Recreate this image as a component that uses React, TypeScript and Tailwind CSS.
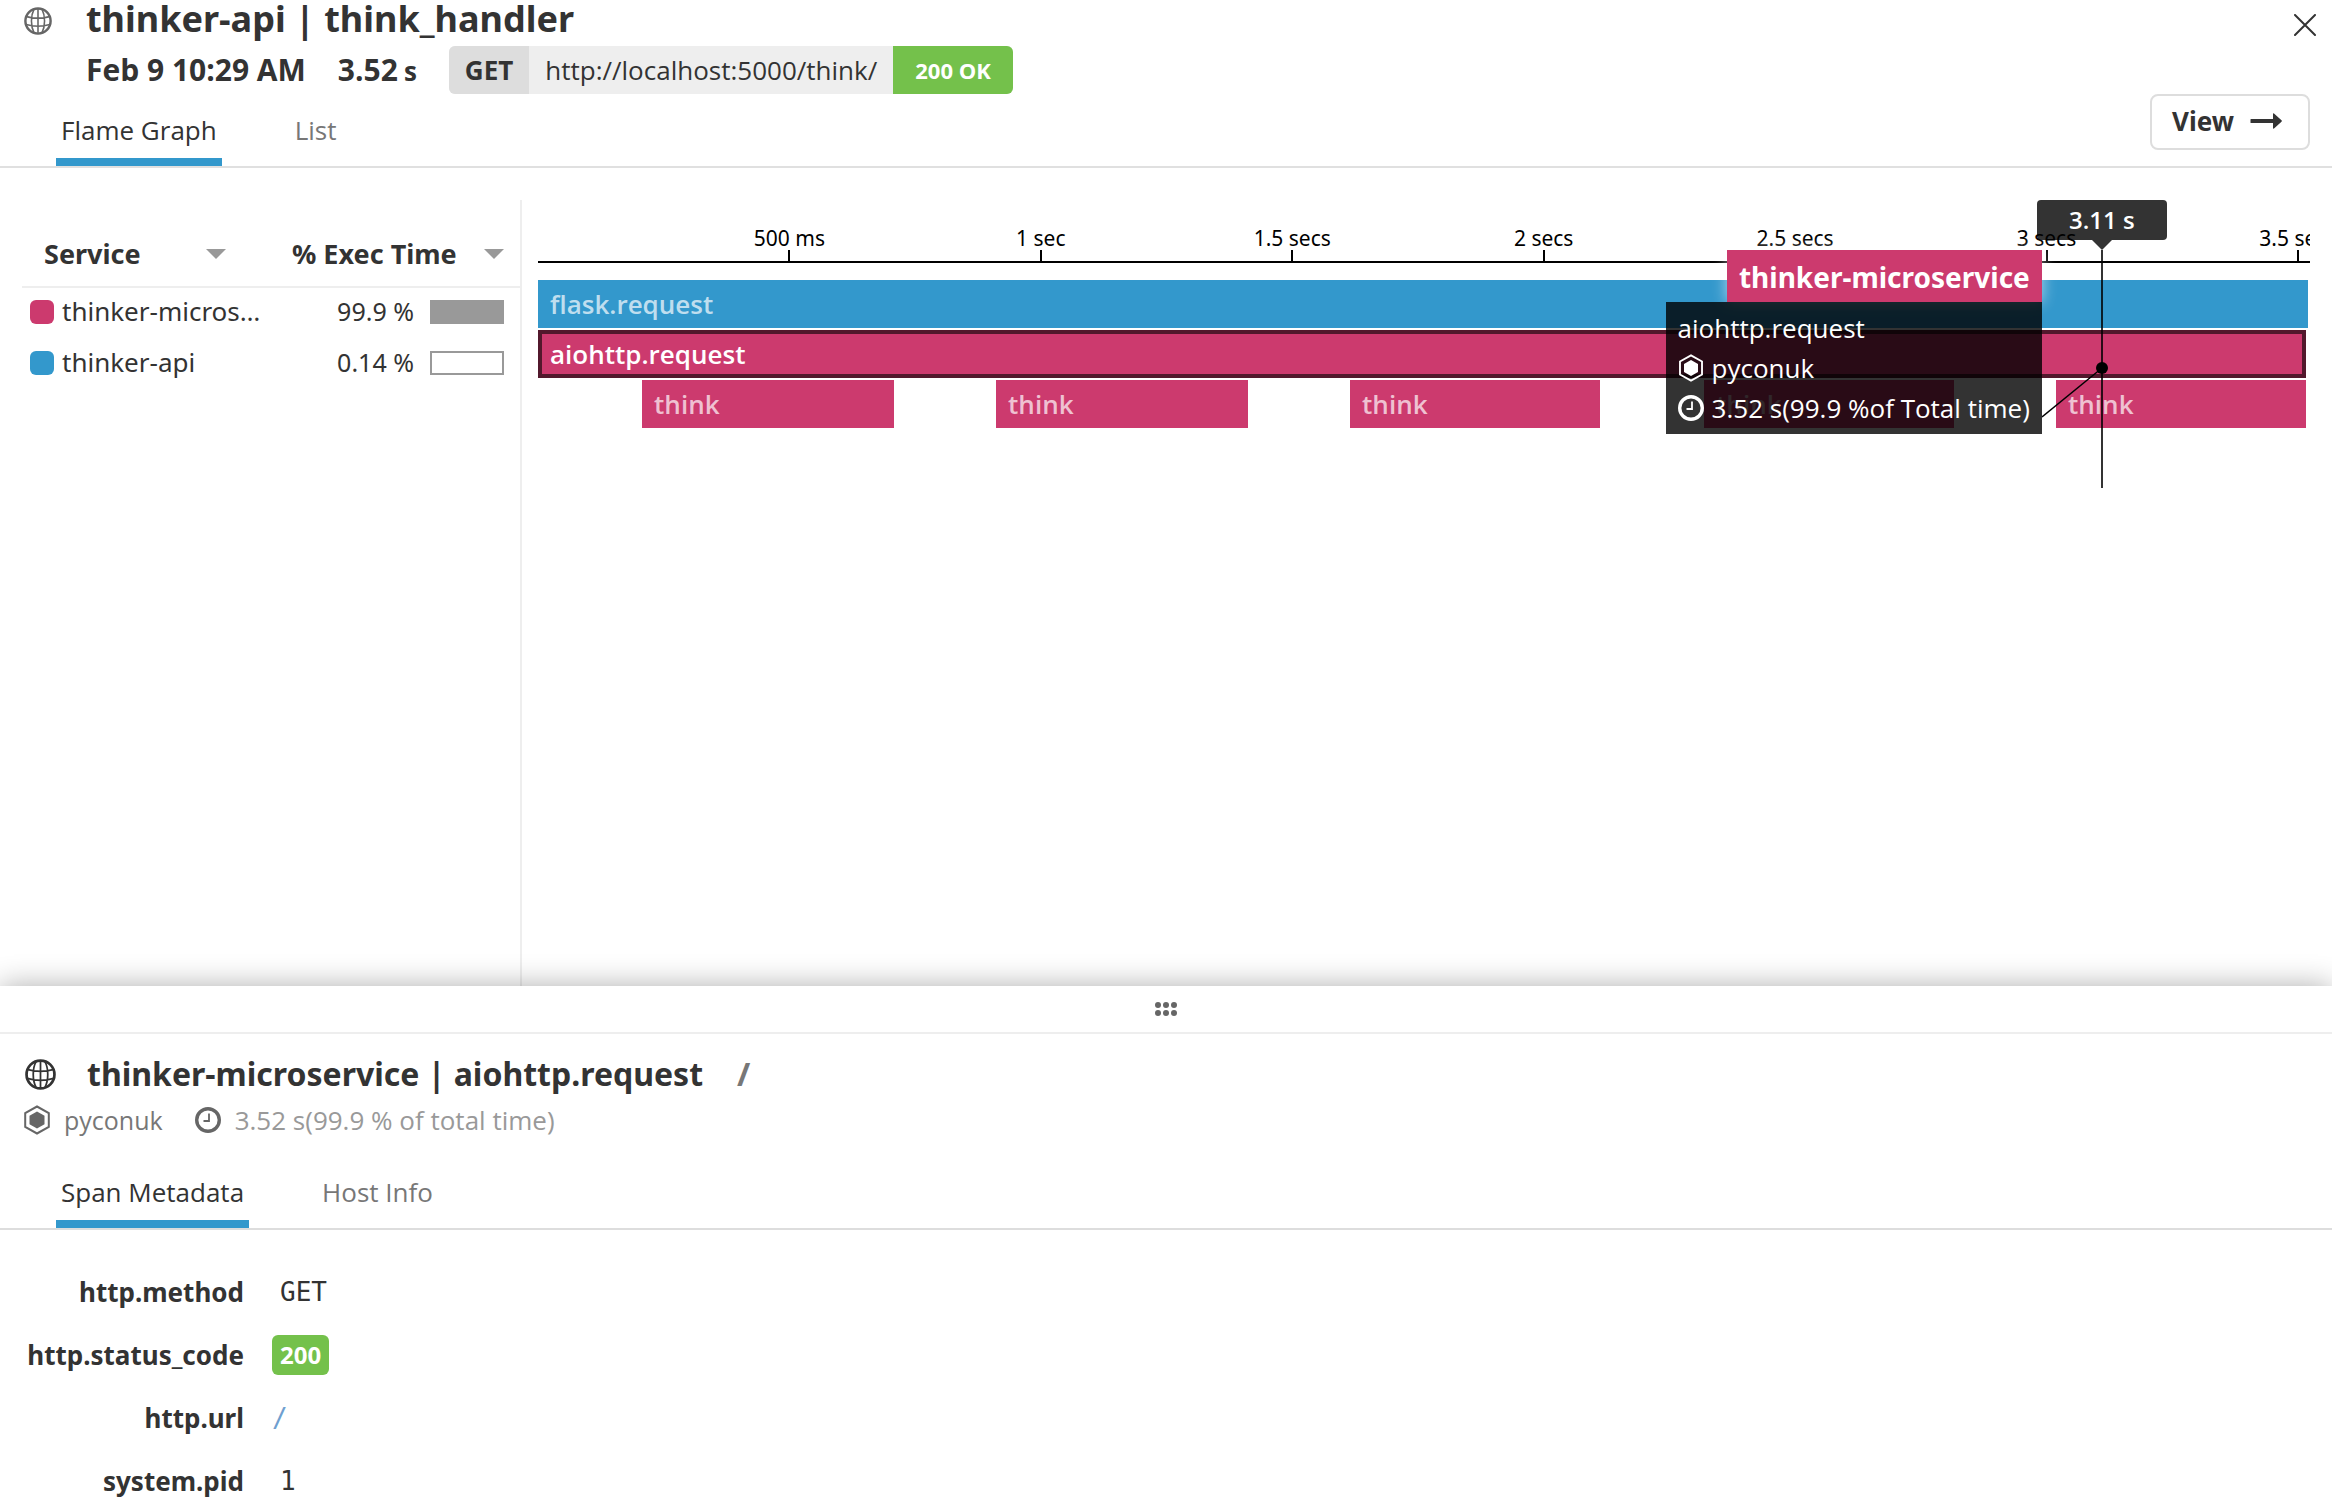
import type { ReactNode } from "react";

const SPAN_MS = 3524;
const pct = (ms: number) => `${(ms / SPAN_MS) * 100}%`;

const ticks = [
  { at: 500, label: "500 ms" },
  { at: 1000, label: "1 sec" },
  { at: 1500, label: "1.5 secs" },
  { at: 2000, label: "2 secs" },
  { at: 2500, label: "2.5 secs" },
  { at: 3000, label: "3 secs" },
  { at: 3500, label: "3.5 secs" },
];

type Span = { name: string; start: number; end: number; tone: "blue" | "pink" | "selected" };

const lanes: Span[][] = [
  [{ name: "flask.request", start: 0, end: 3520, tone: "blue" }],
  [{ name: "aiohttp.request", start: 0, end: 3516, tone: "selected" }],
  [
    { name: "think", start: 207, end: 708, tone: "pink" },
    { name: "think", start: 911, end: 1412, tone: "pink" },
    { name: "think", start: 1615, end: 2112, tone: "pink" },
    { name: "think", start: 2319, end: 2816, tone: "pink" },
    { name: "think", start: 3019, end: 3516, tone: "pink" },
  ],
];

const tones = {
  blue: "bg-[#3398cc] pl-3 text-white/70",
  pink: "bg-[#cc3a6e] pl-3 text-white/70",
  selected: "border-4 border-[#52182c] bg-[#cc3a6e] pl-2 text-white",
};

const services = [
  { name: "thinker-micros…", swatch: "bg-[#cc3a6e]", percent: "99.9 %", bar: "bg-[#999]" },
  { name: "thinker-api", swatch: "bg-[#3398cc]", percent: "0.14 %", bar: "bg-white" },
];

function Globe({ className }: { className: string }) {
  return (
    <svg viewBox="0 0 32 32" className={className} fill="none" stroke="currentColor" strokeWidth="1.8" aria-hidden="true">
      <circle cx="16" cy="16" r="14.4" strokeWidth="2.8" />
      <path d="M16 2v28M11.5 2.5C7.5 10 7.5 22 11.5 29.5M20.500 2.500C24.500 10 24.500 22 20.500 29.500M3 11Q16 14.500 29 11M2.500 20Q16 24 29.500 20" />
    </svg>
  );
}

function Hexagon({ className }: { className: string }) {
  return (
    <svg viewBox="0 0 26 30" className={className} aria-hidden="true">
      <path d="M13 1.500L24.800 8v14L13 28.500 1.200 22V8z" fill="none" stroke="currentColor" strokeWidth="2" />
      <path d="M13 6.500L20.500 10.700v8.600L13 23.500 5.500 19.300v-8.600z" fill="currentColor" />
    </svg>
  );
}

function Clock({ className }: { className: string }) {
  return (
    <svg viewBox="0 0 26 26" className={className} fill="none" stroke="currentColor" aria-hidden="true">
      <circle cx="13" cy="13" r="11.300" strokeWidth="3.400" />
      <path d="M14 6.500v7.500H8.500" strokeWidth="1.800" />
    </svg>
  );
}

function Caret() {
  return (
    <svg viewBox="0 0 20 10" className="h-2.5 w-5 fill-[#999]" aria-hidden="true">
      <path d="M0 0h20L10 10z" />
    </svg>
  );
}

function Tab({ active, children }: { active?: boolean; children: ReactNode }) {
  return (
    <button
      type="button"
      role="tab"
      aria-selected={!!active}
      className={
        active
          ? "border-b-8 border-[#3398cc] px-[5px] pb-2.5 text-[26px] leading-9 text-[#333]"
          : "border-b-8 border-transparent px-[5px] pb-2.5 text-[26px] leading-9 text-[#777]"
      }
    >
      {children}
    </button>
  );
}

function Header() {
  return (
    <header className="flex justify-between border-b-2 border-[#e0e0e0]">
      <div>
        <div className="flex items-center">
          <Globe className="ml-6 mt-1 size-7 text-[#666]" />
          <h1 className="ml-[34px] font-['Noto_Sans',sans-serif] text-[36px] leading-[38px] font-bold">thinker-api | think_handler</h1>
        </div>
        <div className="mt-2 flex h-12 items-center pl-[86px] font-bold">
          <span className="text-[30px] leading-10">Feb 9 10:29 AM</span>
          <span className="ml-8 flex items-baseline gap-1.5 text-[30px] leading-10">
            3.52 <span className="text-[26px]">s</span>
          </span>
          <div className="ml-8 flex h-12 items-center overflow-hidden rounded-md bg-[#eee] text-[26px]">
            <span className="flex h-full items-center bg-[#ddd] px-4">GET</span>
            <span className="px-4 font-normal">http://localhost:5000/think/</span>
            <span className="flex h-full items-center bg-[#74c14b] px-[22px] text-[22px] text-white">200 OK</span>
          </div>
        </div>
        <div role="tablist" className="mt-[18px] flex gap-[68px] pl-14">
          <Tab active>Flame Graph</Tab>
          <Tab>List</Tab>
        </div>
      </div>
      <div className="flex flex-col items-end">
        <button type="button" aria-label="Close" className="mt-3.5 mr-4">
          <svg viewBox="0 0 22 22" className="size-[22px]" stroke="#333" strokeWidth="2" strokeLinecap="round" aria-hidden="true">
            <path d="M1 1l20 20M21 1L1 21" />
          </svg>
        </button>
        <button type="button" className="mt-[58px] mr-[22px] flex h-14 items-center rounded-lg border-2 border-[#ddd] pr-[26px] pb-0.5 pl-5 font-['Noto_Sans',sans-serif] text-[26px] font-bold">
          View
          <svg viewBox="0 0 32 16" className="ml-4 h-4 w-8 fill-[#333]" aria-hidden="true">
            <path d="M1 6h22V1q0-1 1-.5l7.500 6.800q.7.700 0 1.400L24 15.500q-1 .5-1-.5v-5H1q-.5 0-.5-.5v-3q0-.5.500-.5z" />
          </svg>
        </button>
      </div>
    </header>
  );
}

function ServiceTable() {
  return (
    <div className="w-[522px] shrink-0 border-r-2 border-[#eee] pl-[22px]">
      <table className="w-full table-fixed font-['Noto_Sans',sans-serif]">
        <thead>
          <tr className="border-b-2 border-[#eee] text-left text-[27px] leading-9">
            <th className="w-[240px] pt-9 pr-9 pb-[14px] pl-[22px]">
              <span className="flex items-center justify-between">Service <Caret /></span>
            </th>
            <th className="pt-9 pr-4 pb-[14px] pl-[30px]">
              <span className="flex items-center justify-between">% Exec Time <Caret /></span>
            </th>
          </tr>
        </thead>
        <tbody>
          {services.map((s) => (
            <tr key={s.name} className="h-[52px]">
              <td className="pb-1 pl-2">
                <span className="flex items-center gap-2">
                  <span className={`size-6 rounded-md ${s.swatch}`} />
                  <span className="pb-0.5 text-[26px] leading-8">{s.name}</span>
                </span>
              </td>
              <td className="pr-4 pb-1">
                <span className="flex items-center justify-end gap-4">
                  <span className="pb-0.5 text-[25px] leading-8">{s.percent}</span>
                  <span className={`h-6 w-[74px] border-2 border-[#999] ${s.bar}`} />
                </span>
              </td>
            </tr>
          ))}
        </tbody>
      </table>
    </div>
  );
}

function Cursor() {
  return (
    <div className="absolute top-0 w-0" style={{ left: pct(3110) }}>
      <div className="absolute top-[50px] -left-px h-[238px] w-0.5 bg-black/80" />
      <div className="absolute top-0 -left-[65px] flex h-10 w-[130px] items-center justify-center rounded bg-black/80 text-[24px] font-semibold text-white">
        3.11 s
      </div>
      <svg viewBox="0 0 20 10" className="absolute top-10 -left-2.5 h-2.5 w-5 max-w-none fill-black/80" aria-hidden="true">
        <path d="M0 0h20L10 10z" />
      </svg>
      <svg viewBox="0 0 68 60" className="absolute top-40 -left-[60px] h-[60px] w-[68px] max-w-none" aria-hidden="true">
        <path d="M0 57L60 8" stroke="black" strokeWidth="1.500" />
        <circle cx="60" cy="8" r="6" />
      </svg>
      <div role="tooltip" className="absolute top-[50px] right-[60px] flex flex-col items-end whitespace-nowrap text-white">
        <div className="h-[52px] bg-[#cc3a6e] px-3 font-['Noto_Sans',sans-serif] text-[28px] leading-[54px] font-bold shadow-[0_0_14px_rgba(255,255,255,0.6)]">
          thinker-microservice
        </div>
        <div className="relative bg-black/80 px-3 py-1.5 text-[26px] leading-10">
          <p>aiohttp.request</p>
          <p className="flex items-center gap-2">
            <Hexagon className="h-7 w-[26px]" /> pyconuk
          </p>
          <p className="flex items-center gap-2">
            <Clock className="size-[26px]" /> 3.52 s(99.9 %of Total time)
          </p>
        </div>
      </div>
    </div>
  );
}

function FlameGraph() {
  return (
    <div className="min-w-0 flex-1 pr-[22px] pl-4">
      <div className="relative">
        <div className="relative h-[63px] overflow-hidden border-b-2 border-black text-black">
          {ticks.map((t) => (
            <div key={t.at} className="absolute bottom-0 flex w-28 -translate-x-1/2 flex-col items-center" style={{ left: pct(t.at) }}>
              <span className="font-['Noto_Sans',sans-serif] text-[21px] leading-6 whitespace-nowrap">{t.label}</span>
              <span className="h-[11px] w-0.5 bg-black" />
            </div>
          ))}
        </div>
        <div className="mt-[17px] flex flex-col gap-0.5">
          {lanes.map((lane, i) => (
            <div key={i} className="relative h-12">
              {lane.map((s) => (
                <div
                  key={s.start}
                  className={`absolute inset-y-0 flex items-center text-[26px] font-semibold ${tones[s.tone]}`}
                  style={{ left: pct(s.start), width: pct(s.end - s.start) }}
                >
                  {s.name}
                </div>
              ))}
            </div>
          ))}
        </div>
        <Cursor />
      </div>
    </div>
  );
}

function Row({ label, children }: { label: string; children: ReactNode }) {
  return (
    <tr className="h-[63px]">
      <th scope="row" className="w-[244px] text-right font-['Noto_Sans',sans-serif] font-bold">{label}</th>
      <td className="pl-7">{children}</td>
    </tr>
  );
}

function SpanDetails() {
  return (
    <section className="relative bg-white shadow-[0_0_28px_rgba(0,0,0,0.32)]">
      <div className="flex h-12 items-center justify-center border-b-2 border-[#eee]">
        <svg viewBox="0 0 22 14" className="h-3.5 w-[22px] fill-[#666]" aria-hidden="true">
          {[3, 11, 19].map((x) => [3, 11].map((y) => <circle key={`${x}-${y}`} cx={x} cy={y} r="3" />))}
        </svg>
      </div>
      <div className="flex items-center pt-5 pl-[25px] font-['Noto_Sans',sans-serif] text-[32px] leading-10 font-bold">
        <Globe className="size-[31px]" />
        <h2 className="ml-[31px]">thinker-microservice | aiohttp.request</h2>
        <span className="ml-[34px] text-[#777]">/</span>
      </div>
      <div className="mt-2.5 flex items-center pl-6 text-[#666] leading-8">
        <Hexagon className="h-[30px] w-[26px]" />
        <span className="ml-3.5 text-[25px] text-[#777]">pyconuk</span>
        <Clock className="ml-8 size-[26px]" />
        <span className="ml-3.5 text-[26px] text-[#999]">3.52 s(99.9 % of total time)</span>
      </div>
      <div role="tablist" className="mt-[38px] flex gap-[68px] border-b-2 border-[#ddd] pl-14">
        <Tab active>Span Metadata</Tab>
        <Tab>Host Info</Tab>
      </div>
      <table className="mt-[30px] text-[26px] leading-9">
        <tbody>
          <Row label="http.method">
            <span className="pl-2 font-['DejaVu_Sans_Mono',monospace]">GET</span>
          </Row>
          <Row label="http.status_code">
            <span className="inline-block rounded-md bg-[#74c14b] px-2 text-[24px] leading-10 font-bold text-white">200</span>
          </Row>
          <Row label="http.url">
            <a href="/" className="font-['DejaVu_Sans_Mono',monospace] text-[#6f9fd0]">/</a>
          </Row>
          <Row label="system.pid">
            <span className="pl-2 font-['DejaVu_Sans_Mono',monospace]">1</span>
          </Row>
        </tbody>
      </table>
    </section>
  );
}

export default function App() {
  return (
    <div className="flex min-h-screen flex-col overflow-hidden bg-white font-['Open_Sans',sans-serif] text-[#333]">
      <Header />
      <main className="flex min-h-[340px] flex-1 pt-8">
        <ServiceTable />
        <FlameGraph />
      </main>
      <SpanDetails />
    </div>
  );
}
